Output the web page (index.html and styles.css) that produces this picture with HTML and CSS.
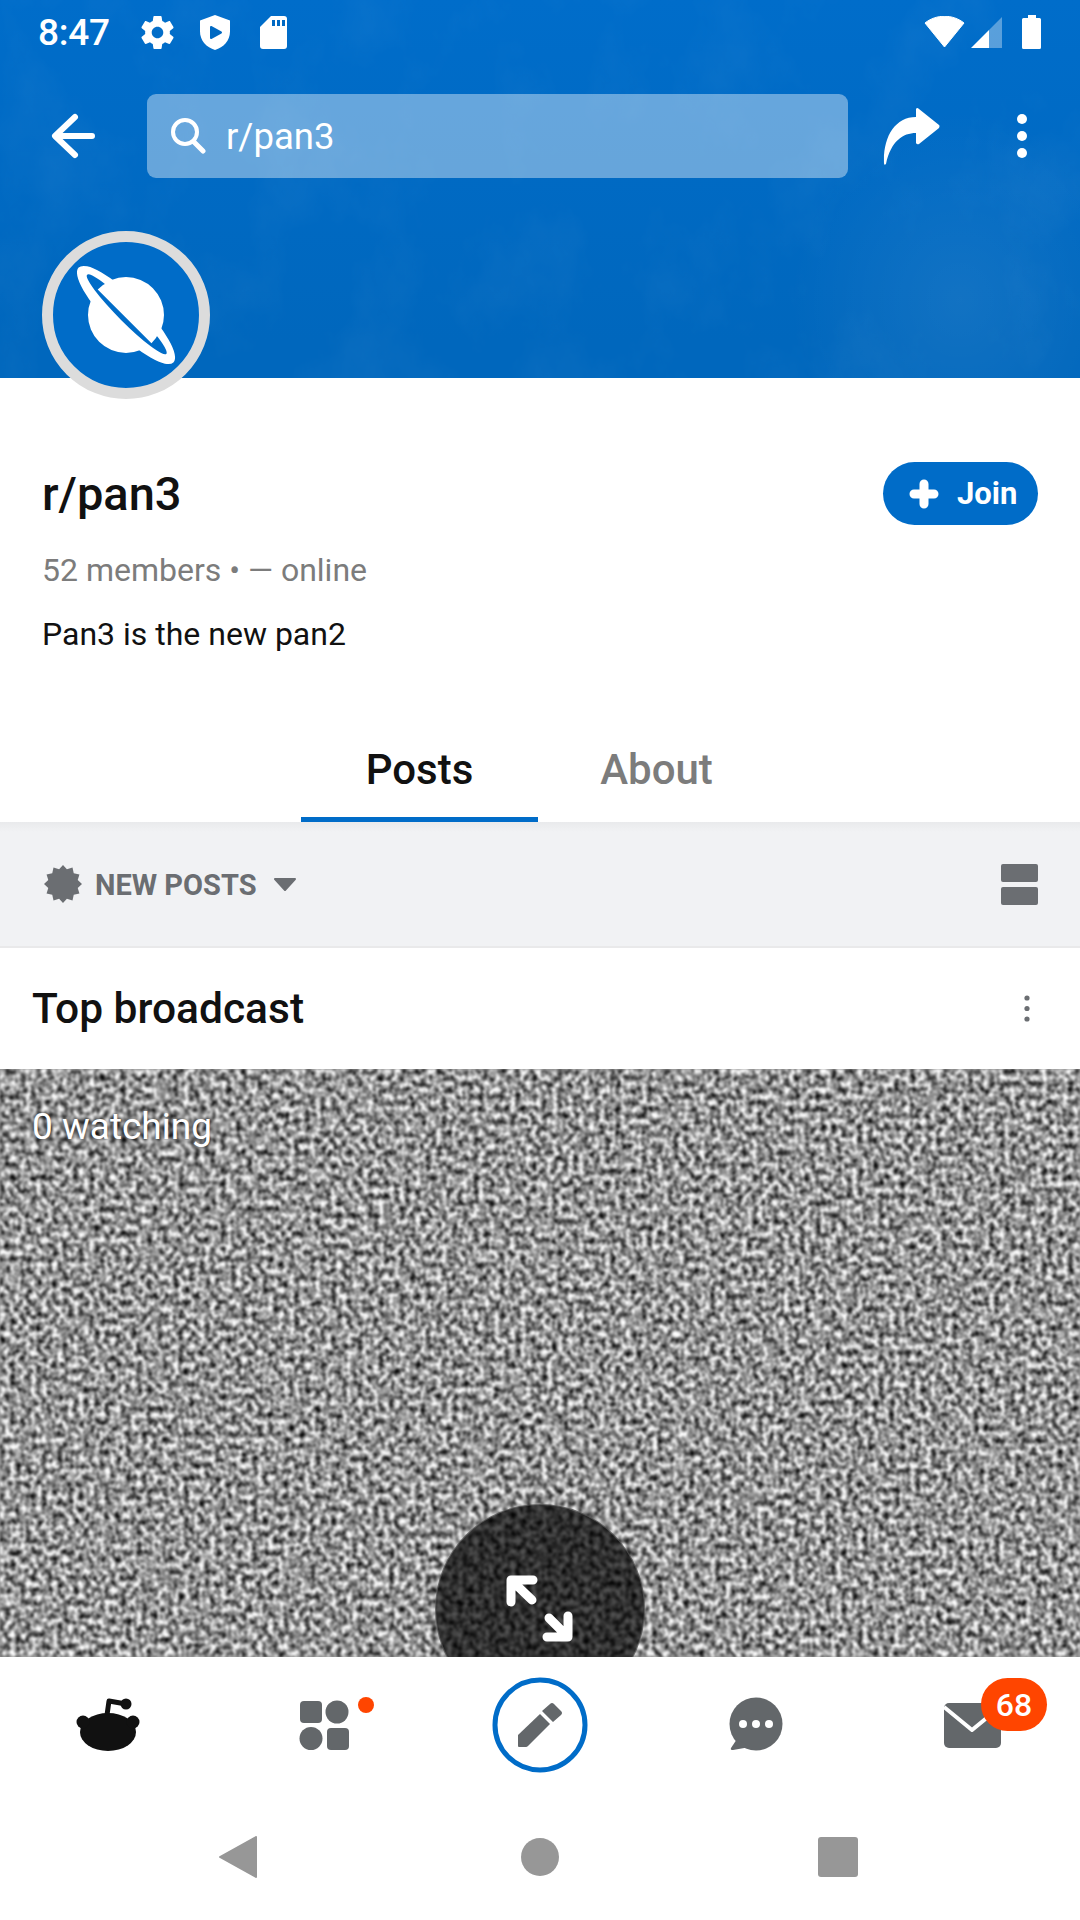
FILE: index.html
```html
<!DOCTYPE html>
<html><head>
<title>r/pan3</title>
<link rel="stylesheet" href="styles.css">
</head><body>
<div class="page">

<header class="banner">
<svg class="tex" width="1080" height="378">
<filter id="paper" x="0" y="0" width="100%" height="100%" color-interpolation-filters="sRGB">
<feTurbulence type="fractalNoise" baseFrequency="0.012 0.009" numOctaves="6" seed="3"/>
<feColorMatrix values="0 0 0 0 1  0 0 0 0 1  0 0 0 0 1  1.1 0 0 0 -0.5"/>
</filter>
<rect width="1080" height="378" filter="url(#paper)" opacity="0.08"/>
</svg>
<div class="status">
<span class="time">8:47</span>
<svg class="st-gear" viewBox="2 2 20 20"><path fill="#fff" d="M19.43 12.98c.04-.32.07-.64.07-.98s-.03-.66-.07-.98l2.11-1.65c.19-.15.24-.42.12-.64l-2-3.46c-.12-.22-.39-.3-.61-.22l-2.49 1c-.52-.4-1.08-.73-1.69-.98l-.38-2.65C14.46 2.18 14.25 2 14 2h-4c-.25 0-.46.18-.49.42l-.38 2.65c-.61.25-1.17.59-1.69.98l-2.49-1c-.23-.09-.49 0-.61.22l-2 3.46c-.13.22-.07.49.12.64l2.11 1.65c-.04.32-.07.65-.07.98s.03.66.07.98l-2.11 1.65c-.19.15-.24.42-.12.64l2 3.46c.12.22.39.3.61.22l2.49-1c.52.4 1.08.73 1.69.98l.38 2.65c.03.24.24.42.49.42h4c.25 0 .46-.18.49-.42l.38-2.65c.61-.25 1.17-.59 1.69-.98l2.49 1c.23.09.49 0 .61-.22l2-3.46c.12-.22.07-.49-.12-.64l-2.11-1.65zM12 15.5c-1.93 0-3.5-1.57-3.5-3.5s1.57-3.5 3.5-3.5 3.5 1.57 3.5 3.5-1.57 3.5-3.5 3.5z"/></svg>
<svg class="st-shield" viewBox="0 0 30 35"><path fill="#fff" d="M15 0L30 5.5V16.5C30 25.5 23.5 32.5 15 35C6.500 32.500 0 25.500 0 16.500V5.500Z"/><path fill="#0069c3" stroke="#0069c3" stroke-width="2" stroke-linejoin="round" d="M11 12V23L21 17.500Z"/></svg>
<svg class="st-sd" viewBox="0 0 27 33"><path fill="#fff" d="M11 0H24Q27 0 27 3V30Q27 33 24 33H3Q0 33 0 30V11Z"/><path fill="#0069c3" d="M12 4h3v6h-3zM17 4h3v6h-3zM22 4h3v6h-3z"/></svg>
<div class="status-right">
<svg class="st-wifi" viewBox="0 0 41 32"><path fill="#fff" stroke="#fff" stroke-linejoin="round" d="M1 7C12 -2 29 -2 40 7L20.500 31Z"/></svg>
<svg class="st-signal" viewBox="0 0 31 31"><path fill="#fff" fill-opacity=".35" d="M31 0V31H18V13Z"/><path fill="#fff" d="M0 31L18 13V31Z"/></svg>
<svg class="st-batt" viewBox="0 0 19 34"><path fill="#fff" d="M6 0H14V3H17.500Q19 3 19 4.500V32.500Q19 34 17.500 34H1.500Q0 34 0 32.500V4.500Q0 3 1.500 3H6Z"/></svg>
</div>
</div>
<div class="toolbar">
<svg class="back" viewBox="0 0 48 48"><path fill="none" stroke="#fff" stroke-width="6" stroke-linecap="round" stroke-linejoin="round" d="M42 24H6M25 5L5 24L25 43"/></svg>
<div class="search">
<svg class="search-ico" viewBox="0 0 36 36"><circle cx="15" cy="14" r="12" fill="none" stroke="#fff" stroke-width="4"/><path stroke="#fff" stroke-width="5" stroke-linecap="round" d="M24 24L33 33"/></svg>
<span>r/pan3</span>
</div>
<svg class="share" viewBox="0 0 57 58"><path fill="#fff" d="M33 2Q34 0 36 2L56 18Q57 19 56 21L36 37Q34 38 33 36V26C20 26 8 34 3 57Q1 59 1 56C0 30 12 10 33 10Z"/></svg>
<svg class="more" viewBox="0 0 12 44"><circle cx="6" cy="5" r="5" fill="#fff"/><circle cx="6" cy="22" r="5" fill="#fff"/><circle cx="6" cy="39" r="5" fill="#fff"/></svg>
</div>
<div class="avatar">
<svg viewBox="0 0 146 146" width="146" height="146">
<g transform="translate(73 73) rotate(45)">
<circle r="38" fill="#fff"/>
<ellipse rx="67" ry="18" fill="#fff"/>
<ellipse cy="-1" rx="56" ry="8" fill="#006cc8"/>
<path fill="#fff" d="M-38 2A38 38 0 0 1 38 2Z"/>
</g>
</svg>
</div>
</header>

<section class="info">
<div class="title-row">
<h1>r/pan3</h1>
<div class="join">
<svg viewBox="0 0 30 30"><path stroke="#fff" stroke-width="9" stroke-linecap="round" d="M15 5V25M5 15H25"/></svg>
<span>Join</span>
</div>
</div>
<p class="meta">52 members • — online</p>
<p class="desc">Pan3 is the new pan2</p>
</section>

<nav class="tabs">
<div class="tab on">Posts</div>
<div class="tab">About</div>
</nav>

<div class="sortbar">
<svg class="burst" viewBox="0 0 40 40"><polygon fill="#6b6e72" points="20,0 24.100,4.500 30,2.700 31.300,8.700 37.300,10 35.500,15.900 40,20 35.500,24.100 37.300,30 31.300,31.300 30,37.300 24.100,35.500 20,40 15.900,35.500 10,37.300 8.700,31.300 2.700,30 4.500,24.100 0,20 4.500,15.900 2.700,10 8.700,8.700 10,2.700 15.900,4.500"/></svg>
<span class="sort-label">NEW POSTS</span>
<svg class="caret" viewBox="0 0 22 13"><path fill="#6b6e72" stroke="#6b6e72" stroke-width="2" stroke-linejoin="round" d="M1 1H21L11 12Z"/></svg>
<svg class="layout" viewBox="0 0 37 41"><rect width="37" height="18" rx="2" fill="#6b6e72"/><rect y="23" width="37" height="18" rx="2" fill="#6b6e72"/></svg>
</div>

<div class="card-head">
<h2>Top broadcast</h2>
<svg class="more-sm" viewBox="0 0 6 27"><circle cx="3" cy="3" r="2.600" fill="#6b6e72"/><circle cx="3" cy="13.500" r="2.600" fill="#6b6e72"/><circle cx="3" cy="24" r="2.600" fill="#6b6e72"/></svg>
</div>

<div class="video">
<svg class="noise" width="1080" height="588">
<filter id="static" x="0" y="0" width="100%" height="100%" color-interpolation-filters="sRGB">
<feTurbulence type="fractalNoise" baseFrequency="0.19 0.16" numOctaves="4" seed="23"/>
<feColorMatrix values="1.800 0 0 0 -0.32  1.800 0 0 0 -0.32  1.800 0 0 0 -0.32  0 0 0 0 1"/>
<feGaussianBlur stdDeviation="0.8"/>
</filter>
<rect width="1080" height="588" filter="url(#static)"/>
</svg>
<span class="watching">0 watching</span>
<div class="expand">
<svg viewBox="0 0 70 70" width="70" height="70"><path fill="none" stroke="#fff" stroke-width="9" stroke-linecap="round" stroke-linejoin="round" d="M28 6H6V28M6 6L27 26M63 42V63H42M63 63L44 44"/></svg>
</div>
</div>

<nav class="bottom">
<div class="item">
<svg class="ico-home" viewBox="0 0 64 56"><ellipse cx="32" cy="35" rx="28" ry="19" fill="#111"/><circle cx="7" cy="25" r="6.500" fill="#111"/><circle cx="57" cy="25" r="6.500" fill="#111"/><path fill="none" stroke="#111" stroke-width="5" stroke-linejoin="round" d="M31 18L33 4L50 7"/><circle cx="50" cy="7" r="5.500" fill="#111"/></svg>
</div>
<div class="item">
<svg class="ico-grid" viewBox="0 0 50 50"><rect x="1" y="1" width="22" height="22" rx="4" fill="#63676a"/><circle cx="38" cy="12" r="11.500" fill="#63676a"/><circle cx="12" cy="38.500" r="11.500" fill="#63676a"/><rect x="28" y="28" width="22" height="22" rx="4" fill="#63676a"/></svg>
<span class="dot"></span>
</div>
<div class="item">
<svg class="ico-post" viewBox="0 0 100 100"><circle cx="50" cy="50" r="45" fill="none" stroke="#006cc8" stroke-width="5"/><path fill="#63676a" d="M28 60L50 39L60 49L38 71Q37 72 36 72H29Q28 72 28 71Z"/><path fill="#63676a" d="M52 36L60 29Q62 27 64 29L71 36Q73 38 71 40L63 47Z"/></svg>
</div>
<div class="item">
<svg class="ico-chat" viewBox="0 0 56 56"><circle cx="28" cy="27" r="26.500" fill="#63676a"/><path fill="#63676a" d="M9 42L3 51Q2 53 5 53L22 50Z"/><circle cx="15" cy="27" r="4" fill="#fff"/><circle cx="28" cy="27" r="4" fill="#fff"/><circle cx="41" cy="27" r="4" fill="#fff"/></svg>
</div>
<div class="item">
<svg class="ico-mail" viewBox="0 0 57 45"><rect width="57" height="45" rx="5" fill="#63676a"/><path fill="none" stroke="#fff" stroke-width="4" stroke-linejoin="round" d="M0 4L28 27L56 4"/></svg>
<span class="badge">68</span>
</div>
</nav>

<div class="sysnav">
<svg class="sys-back" viewBox="0 0 38 42"><path fill="#979797" stroke="#979797" stroke-width="2" stroke-linejoin="round" d="M37 1V41L1 21Z"/></svg>
<span class="sys-home"></span>
<span class="sys-recent"></span>
</div>

</div>
</body></html>
```

FILE: styles.css
```css
* {box-sizing: border-box;}
html, body {margin: 0; padding: 0;}
body {background: #fff; font-family: Roboto, "Liberation Sans", sans-serif; color: #111;}
svg {display: block; flex: none;}
h1, h2, p {margin: 0;}

.page {width: 1080px; height: 1920px; display: flex; flex-direction: column; overflow: hidden;}

/* banner */
.banner {height: 378px; flex: none; position: relative; background: radial-gradient(ellipse 170px 190px at 960px 300px, rgba(255, 255, 255, .07), transparent), linear-gradient(#006dca, #0067bd 90%);}
.tex {position: absolute; left: 0; top: 0;}
.status {height: 64px; display: flex; align-items: center; gap: 28px; padding: 0 39px 0 38px; position: relative; color: #fff;}
.time {font-size: 37px; font-weight: 500; width: 71px; white-space: nowrap; letter-spacing: -0.3px;}
.st-gear {width: 33px; height: 33px; margin-left: 4px;}
.st-shield {width: 30px; height: 35px; margin-left: -2px;}
.st-sd {width: 27px; height: 33px; margin-left: 2px;}
.status-right {margin-left: auto; display: flex; align-items: center;}
.st-wifi {width: 41px; height: 32px;}
.st-signal {width: 31px; height: 31px; margin-left: 6px;}
.st-batt {width: 19px; height: 34px; margin-left: 20px;}

.toolbar {display: flex; align-items: center; height: 84px; margin-top: 30px; padding-left: 50px; position: relative;}
.back {width: 48px; height: 48px;}
.search {width: 701px; height: 84px; margin-left: 49px; border-radius: 9px; background: rgba(255, 255, 255, .4); display: flex; align-items: center; padding-left: 23px; color: #fff; font-size: 36.500px;}
.search-ico {width: 36px; height: 36px; margin-right: 20px;}
.share {width: 57px; height: 58px; margin-left: 35px;}
.more {width: 12px; height: 44px; margin-left: 76px;}

.avatar {position: absolute; left: 42px; top: 231px; width: 168px; height: 168px; border-radius: 50%; border: 11px solid #dcdcdc; background: #006cc8;}

/* community info */
.info {height: 344px; flex: none; padding: 84px 42px 0;}
.title-row {display: flex; justify-content: space-between; align-items: center; height: 63px;}
h1 {font-size: 47px; font-weight: 500; line-height: 63px;}
.join {width: 155px; height: 63px; border-radius: 32px; background: #006cc8; color: #fff; display: flex; align-items: center; padding-left: 26px; gap: 18px; font-size: 31px; font-weight: 700;}
.join svg {width: 30px; height: 30px;}
.meta {font-size: 32px; line-height: 40px; margin-top: 25px; color: #7c7c7c;}
.desc {font-size: 32px; line-height: 40px; margin-top: 24px; color: #111;}

/* tabs */
.tabs {height: 100px; flex: none; display: flex; padding-left: 301px;}
.tab {width: 237px; display: flex; align-items: center; justify-content: center; font-size: 42px; font-weight: 500; color: #7c7c7c; border-bottom: 5px solid transparent;}
.tab.on {color: #111; border-color: #006cc8;}

/* sort bar */
.sortbar {height: 126px; flex: none; display: flex; align-items: center; padding: 0 42px 0 44px; background: linear-gradient(#e9eaec, #f1f2f4 10px); border-bottom: 2px solid #e9e9ea; color: #6b6e72;}
.burst {width: 38px; height: 40px;}
.sort-label {font-size: 29px; font-weight: 700; margin: 2px 0 0 13px;}
.caret {width: 22px; height: 13px; margin-left: 17px;}
.layout {width: 37px; height: 41px; margin-left: auto;}

/* broadcast */
.card-head {height: 121px; flex: none; display: flex; align-items: center; justify-content: space-between; padding: 0 50px 0 32px;}
h2 {font-size: 42.500px; font-weight: 500;}
.more-sm {width: 6px; height: 27px;}

.video {height: 588px; flex: none; position: relative; overflow: hidden; background: #999;}
.noise {position: absolute; left: 0; top: 0;}
.watching {position: absolute; left: 32px; top: 38px; font-size: 37px; line-height: 40px; color: #fff; text-shadow: 0 1px 4px rgba(0, 0, 0, .7);}
.expand {position: absolute; left: 435px; top: 435px; width: 210px; height: 210px; border-radius: 50%; background: rgba(0, 0, 0, .68); border: 1px solid rgba(255, 255, 255, .2); display: flex; align-items: center; justify-content: center;}

/* bottom nav */
.bottom {height: 136px; flex: none; display: grid; grid-template-columns: repeat(5, 216px); background: #fff;}
.item {position: relative; display: flex; align-items: center; justify-content: center;}
.ico-home {width: 64px; height: 56px;}
.ico-grid {width: 50px; height: 50px;}
.ico-post {width: 100px; height: 100px;}
.ico-chat {width: 56px; height: 56px;}
.ico-mail {width: 57px; height: 45px;}
.dot {position: absolute; left: 142px; top: 40px; width: 16px; height: 16px; border-radius: 50%; background: #ff4500;}
.badge {position: absolute; left: 117px; top: 21px; width: 66px; height: 53px; border-radius: 27px; background: #ff4500; color: #fff; font-size: 32px; font-weight: 500; display: flex; align-items: center; justify-content: center;}

/* android nav */
.sysnav {height: 127px; flex: none; position: relative; display: flex; align-items: center;}
.sys-back {width: 38px; height: 42px; margin-left: 219px;}
.sys-home {width: 38px; height: 38px; border-radius: 50%; background: #979797; margin-left: 264px;}
.sys-recent {width: 40px; height: 40px; border-radius: 3px; background: #979797; margin-left: 259px;}
```
